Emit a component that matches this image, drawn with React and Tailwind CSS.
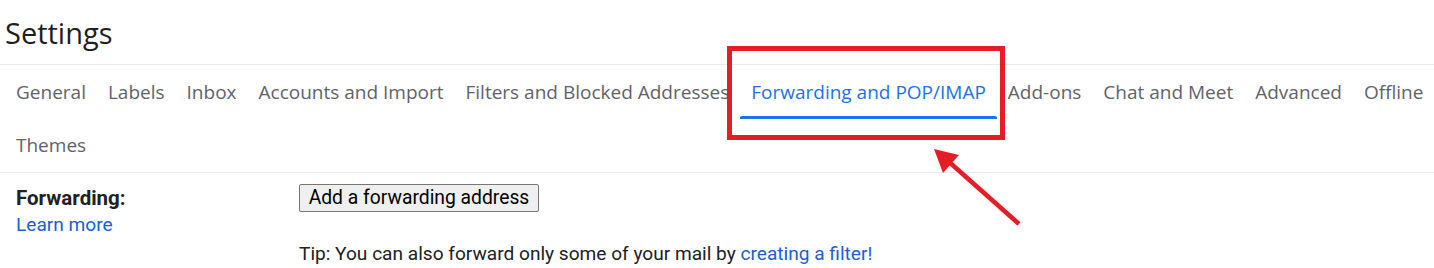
import React from "react";

const tabs = [
  "General",
  "Labels",
  "Inbox",
  "Accounts and Import",
  "Filters and Blocked Addresses",
  "Forwarding and POP/IMAP",
  "Add-ons",
  "Chat and Meet",
  "Advanced",
  "Offline",
  "Themes",
];

export default function App() {
  return (
    <div className="relative w-[1434px] h-[268px] bg-white overflow-hidden" style={{ fontFamily: "Roboto, Arial, sans-serif" }}>
      <div className="h-[65px] flex items-center pl-[5px] border-b border-[#e8eaed]">
        <h1 className="text-[29px] text-[#1f1f1f] leading-none font-normal" style={{ fontFamily: "'Open Sans', Roboto, sans-serif" }}>
          Settings
        </h1>
      </div>
      <div className="w-[1455px] flex flex-wrap pl-[5px] border-b border-[#e8eaed]" style={{ fontFamily: "'Open Sans', Roboto, sans-serif" }}>
        {tabs.map((t) => {
          const active = t === "Forwarding and POP/IMAP";
          return (
            <div
              key={t}
              className={
                active
                  ? "relative h-[53.5px] px-[11px] flex items-center text-[19px] text-[#1a73e8] whitespace-nowrap"
                  : "relative h-[53.5px] px-[11px] flex items-center text-[19px] text-[#5f6368] whitespace-nowrap"
              }
            >
              {t}
              {active && <div className="absolute left-0 right-0 bottom-0 h-[3px] bg-[#1a73e8] rounded-t-[2px]" />}
            </div>
          );
        })}
      </div>
      <div className="flex pl-4 pt-[11px] text-[19.1px] text-[#202124]">
        <div className="w-[283px] flex flex-col">
          <div className="h-[28px] flex items-center font-bold text-[20.5px]">Forwarding:</div>
          <div className="h-[26px] pt-[1px] flex items-center text-[#1a5fd6]">Learn more</div>
        </div>
        <div className="flex flex-col">
          <button className="h-[28px] w-[240px] border border-[#767676] bg-[#efefef] rounded-[2px] text-[19.3px] text-black leading-none">
            Add a forwarding address
          </button>
          <div className="mt-[30px] h-[24px] flex items-center whitespace-nowrap">
            Tip: You can also forward only some of your mail by&nbsp;<span className="text-[#1a5fd6]">creating a filter!</span>
          </div>
        </div>
      </div>
      <svg className="absolute left-0 top-0 pointer-events-none" width="1434" height="268">
        <rect x="729.5" y="48.5" width="273" height="89" fill="none" stroke="#e41e25" strokeWidth="5" />
        <line x1="1019" y1="224" x2="948" y2="161" stroke="#e41e25" strokeWidth="4.5" />
        <polygon points="934,149 959,155 943,173" fill="#e41e25" />
      </svg>
    </div>
  );
}
